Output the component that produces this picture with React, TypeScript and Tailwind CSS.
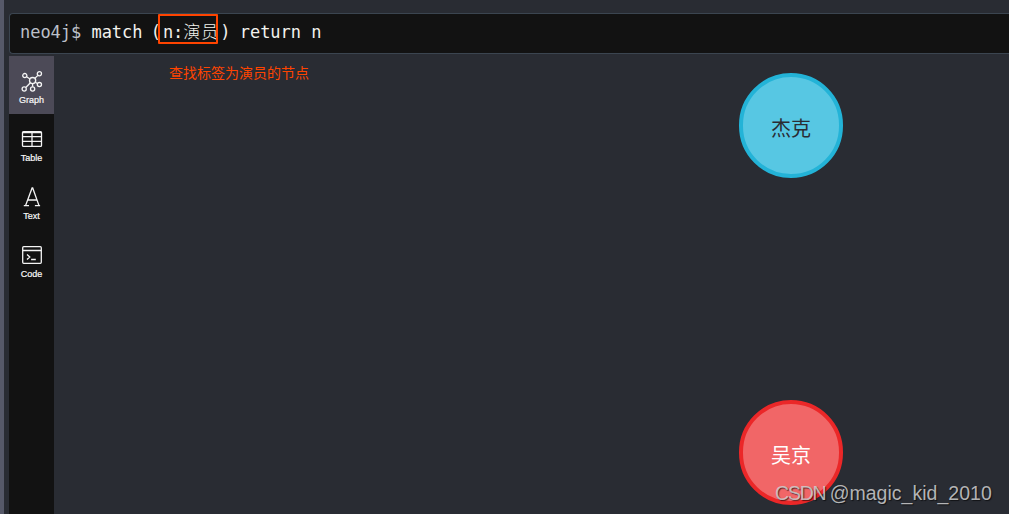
import type { ReactNode } from 'react'

const VIEWS: { name: string; active?: boolean; icon: ReactNode }[] = [
  {
    name: 'Graph',
    active: true,
    icon: (
      <>
        <circle cx="11.6" cy="9.6" r="3.1" />
        <circle cx="3.8" cy="4.6" r="2.1" />
        <circle cx="18.4" cy="2.8" r="2.1" />
        <circle cx="18.4" cy="13.6" r="2.1" />
        <circle cx="3.2" cy="18" r="2.1" />
        <circle cx="11.6" cy="18" r="2.1" />
        <path d="M5.6 5.8l3.4 2.2M16.9 4.4l-3.1 3M14.3 11.2l2.1 1.3M4.8 16.5l4.6-4.7M11.6 12.7v3.1" />
      </>
    ),
  },
  {
    name: 'Table',
    icon: (
      <>
        <rect x="1.5" y="2.6" width="19" height="14.8" rx="1" />
        <path d="M1.5 3.5h19M1.5 7.6h19M1.5 12.4h19M11 3v14.4" />
      </>
    ),
  },
  {
    name: 'Text',
    icon: <path d="M4.6 18.6L11.1 1h.6l6.3 17.6M6.8 13H16M2.8 18.6H8M13.9 18.6h5.2" />,
  },
  {
    name: 'Code',
    icon: (
      <>
        <rect x="1.7" y="1.7" width="18.6" height="16.6" rx="1" />
        <path d="M1.7 5.5h18.6M6 9.4l2.8 2.6L6 14.6M10.1 14.5h4.7" />
      </>
    ),
  },
]

const NODES = [
  { label: '杰克', style: 'left-[685px] top-[17px] border-[#23b3d7] bg-[#57c7e3] text-[#2a2c34]' },
  { label: '吴京', style: 'left-[685px] top-[344px] border-[#eb2728] bg-[#f16667] text-white' },
]

export default function App() {
  return (
    <div className="relative flex h-[514px] w-[1009px] overflow-hidden bg-[#292c33]">
      <div className="w-1 shrink-0 bg-[#565969]" />

      <div className="flex min-w-0 flex-1 flex-col pl-[5px] pt-[13px]">
        {/* Cypher editor */}
        <div className="flex h-[41px] shrink-0 items-baseline whitespace-pre rounded-l-sm border border-r-0 border-[#3b4550] bg-[#121212] pl-2.5 pt-2 font-['DejaVu_Sans_Mono','Noto_Sans_CJK_SC',monospace] text-[17px] leading-5 tracking-[-0.03px] text-[#f3f3ee]">
          <span className="text-[#bcc0c9]">neo4j$ </span>
          <span>match </span>
          <span className="-ml-0.5 mr-0.5">(</span>
          <span className="relative">
            n:
            <span className="font-['Noto_Sans_CJK_SC',sans-serif] font-light leading-none tracking-[1px]">演员</span>
            <span className="absolute -left-[5px] -top-[8px] h-[30px] w-[60px] rounded-[1px] border-2 border-[#ff4400]" />
          </span>
          <span className="ml-px mr-[-1px]">)</span>
          <span> return n</span>
        </div>

        <div className="mt-0.5 flex min-h-0 flex-1">
          <nav className="w-[45px] shrink-0 bg-[#121212]">
            {VIEWS.map((view) => (
              <div
                key={view.name}
                className={`flex h-[58px] flex-col items-center pt-[15px] text-[#f4f4f4] ${view.active ? 'bg-[#4c4a57]' : ''}`}
              >
                <svg className="h-[21px] w-[21px] overflow-visible" viewBox="0 0 21 21" fill="none" stroke="currentColor" strokeWidth="1.3">
                  {view.icon}
                </svg>
                <span className="mt-0.5 font-['Liberation_Sans',sans-serif] text-[9px] font-normal leading-3 [-webkit-text-stroke:0.2px_white]">
                  {view.name}
                </span>
              </div>
            ))}
          </nav>

          {/* Graph canvas */}
          <main className="relative flex-1 font-['Noto_Sans_CJK_SC',sans-serif]">
            <p className="absolute left-[115px] top-[6px] whitespace-nowrap text-[14px] leading-5 text-[#ff4400]">
              查找标签为演员的节点
            </p>
            {NODES.map((node) => (
              <div
                key={node.label}
                className={`absolute flex h-[105px] w-[104px] items-center justify-center rounded-full border-4 pt-[5px] text-[20px] leading-6 ${node.style}`}
              >
                {node.label}
              </div>
            ))}
            <div className="absolute left-[721px] top-[425px] whitespace-nowrap font-['Liberation_Sans',sans-serif] text-[19.5px] leading-6 text-[#d0d0d0]/85 [text-shadow:1px_1px_1px_rgba(0,0,0,0.6)]">
              <span className="tracking-[-1.2px]">CSDN </span>
              <span className="tracking-[0.02px]">@magic_kid_2010</span>
            </div>
          </main>
        </div>
      </div>
    </div>
  )
}
